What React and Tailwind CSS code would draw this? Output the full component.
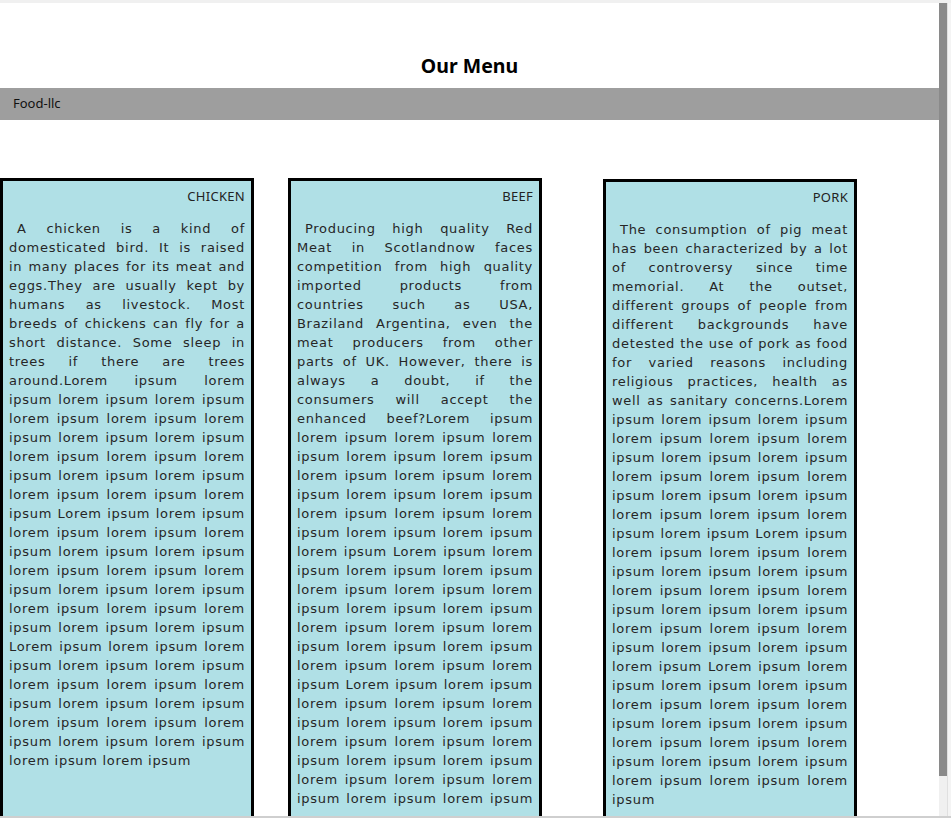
const MENU = [
  {
    title: 'CHICKEN',
    offset: '',
    open: false,
    lines: [
      'A chicken is a kind of',
      'domesticated bird. It is raised',
      'in many places for its meat and',
      'eggs.They are usually kept by',
      'humans as livestock. Most',
      'breeds of chickens can fly for a',
      'short distance. Some sleep in',
      'trees if there are trees',
      'around.Lorem ipsum lorem',
      'ipsum lorem ipsum lorem ipsum',
      'lorem ipsum lorem ipsum lorem',
      'ipsum lorem ipsum lorem ipsum',
      'lorem ipsum lorem ipsum lorem',
      'ipsum lorem ipsum lorem ipsum',
      'lorem ipsum lorem ipsum lorem',
      'ipsum Lorem ipsum lorem ipsum',
      'lorem ipsum lorem ipsum lorem',
      'ipsum lorem ipsum lorem ipsum',
      'lorem ipsum lorem ipsum lorem',
      'ipsum lorem ipsum lorem ipsum',
      'lorem ipsum lorem ipsum lorem',
      'ipsum lorem ipsum lorem ipsum',
      'Lorem ipsum lorem ipsum lorem',
      'ipsum lorem ipsum lorem ipsum',
      'lorem ipsum lorem ipsum lorem',
      'ipsum lorem ipsum lorem ipsum',
      'lorem ipsum lorem ipsum lorem',
      'ipsum lorem ipsum lorem ipsum',
      'lorem ipsum lorem ipsum',
    ],
  },
  {
    title: 'BEEF',
    offset: 'ml-[34px]',
    open: true,
    lines: [
      'Producing high quality Red',
      'Meat in Scotlandnow faces',
      'competition from high quality',
      'imported products from',
      'countries such as USA,',
      'Braziland Argentina, even the',
      'meat producers from other',
      'parts of UK. However, there is',
      'always a doubt, if the',
      'consumers will accept the',
      'enhanced beef?Lorem ipsum',
      'lorem ipsum lorem ipsum lorem',
      'ipsum lorem ipsum lorem ipsum',
      'lorem ipsum lorem ipsum lorem',
      'ipsum lorem ipsum lorem ipsum',
      'lorem ipsum lorem ipsum lorem',
      'ipsum lorem ipsum lorem ipsum',
      'lorem ipsum Lorem ipsum lorem',
      'ipsum lorem ipsum lorem ipsum',
      'lorem ipsum lorem ipsum lorem',
      'ipsum lorem ipsum lorem ipsum',
      'lorem ipsum lorem ipsum lorem',
      'ipsum lorem ipsum lorem ipsum',
      'lorem ipsum lorem ipsum lorem',
      'ipsum Lorem ipsum lorem ipsum',
      'lorem ipsum lorem ipsum lorem',
      'ipsum lorem ipsum lorem ipsum',
      'lorem ipsum lorem ipsum lorem',
      'ipsum lorem ipsum lorem ipsum',
      'lorem ipsum lorem ipsum lorem',
      'ipsum lorem ipsum lorem ipsum',
    ],
  },
  {
    title: 'PORK',
    offset: 'ml-[61px] mt-px',
    open: false,
    lines: [
      'The consumption of pig meat',
      'has been characterized by a lot',
      'of controversy since time',
      'memorial. At the outset,',
      'different groups of people from',
      'different backgrounds have',
      'detested the use of pork as food',
      'for varied reasons including',
      'religious practices, health as',
      'well as sanitary concerns.Lorem',
      'ipsum lorem ipsum lorem ipsum',
      'lorem ipsum lorem ipsum lorem',
      'ipsum lorem ipsum lorem ipsum',
      'lorem ipsum lorem ipsum lorem',
      'ipsum lorem ipsum lorem ipsum',
      'lorem ipsum lorem ipsum lorem',
      'ipsum lorem ipsum Lorem ipsum',
      'lorem ipsum lorem ipsum lorem',
      'ipsum lorem ipsum lorem ipsum',
      'lorem ipsum lorem ipsum lorem',
      'ipsum lorem ipsum lorem ipsum',
      'lorem ipsum lorem ipsum lorem',
      'ipsum lorem ipsum lorem ipsum',
      'lorem ipsum Lorem ipsum lorem',
      'ipsum lorem ipsum lorem ipsum',
      'lorem ipsum lorem ipsum lorem',
      'ipsum lorem ipsum lorem ipsum',
      'lorem ipsum lorem ipsum lorem',
      'ipsum lorem ipsum lorem ipsum',
      'lorem ipsum lorem ipsum lorem',
      'ipsum',
    ],
  },
];

function MenuCard({ item }) {
  const last = item.open ? -1 : item.lines.length - 1;
  return (
    <div className={'w-[254px] h-[700px] shrink-0 border-[3px] border-black bg-[#b0e0e6] p-[6px] ' + item.offset}>
      <p className="text-right font-['Noto_Sans',sans-serif] text-[13px] leading-[19px] tracking-[0.3px] text-[#222]">{item.title}</p>
      <div className="mt-[13px] font-['DejaVu_Sans',Verdana,sans-serif] text-[13px] leading-[19px] tracking-[0.7px] text-[#262626]">
        {item.lines.map((line, i) => (
          <div
            key={i}
            className={(i === last ? 'text-left' : 'text-justify [text-align-last:justify]') + (i === 0 ? ' pl-[8px]' : '') + ' whitespace-nowrap'}
          >
            {line}
          </div>
        ))}
      </div>
    </div>
  );
}

export default function App() {
  return (
    <div className="flex flex-col w-[951px] h-[818px] overflow-hidden bg-[#f0f0f0]">
      <div className="h-[3px] shrink-0" />
      <div className="flex flex-1 min-h-0">
        <main className="w-[939px] shrink-0 bg-white overflow-hidden">
          <h1 className="pt-[49px] text-center font-['Noto_Sans',sans-serif] text-[19.5px] leading-[28px] font-bold text-black">Our Menu</h1>
          <div className="mt-[8px] h-[32px] flex items-center pl-[13px] bg-[#9e9e9e] font-['Noto_Sans',sans-serif] text-[13px] text-[#111]">Food-llc</div>
          <div className="flex items-start mt-[58px]">
            {MENU.map(item => <MenuCard key={item.title} item={item} />)}
          </div>
        </main>
        <div className="w-[8px] shrink-0 flex flex-col">
          <div className="h-[773px] bg-[#8a8a8a]" />
          <div className="flex-1 bg-[#f0f0f0]" />
        </div>
        <div className="flex-1 bg-[#f4f4f4] border-l border-[#e0e0e0]" />
      </div>
      <div className="h-[2px] shrink-0 bg-[#cfcfcf]" />
    </div>
  );
}
